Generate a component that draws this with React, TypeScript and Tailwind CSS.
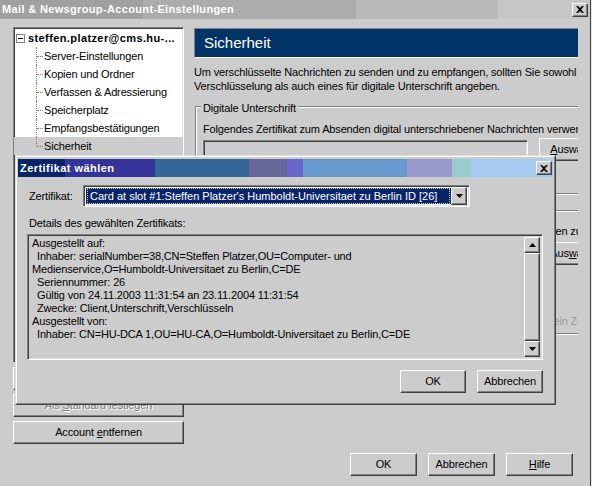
/**
 * Mail & Newsgroup account settings with the certificate picker dialog on top
 * Classic Windows look: grey surfaces, bevelled buttons, sunken fields
 */

const raised =
    'border border-t-white border-l-white border-r-[#404040] border-b-[#404040] shadow-[inset_-1px_-1px_0_#808080]'
const sunken =
    'border border-t-[#808080] border-l-[#808080] border-r-white border-b-white shadow-[inset_1px_1px_0_#404040,inset_-1px_-1px_0_#dfdfdf]'
const etched = 'border border-[#808080] shadow-[inset_1px_1px_0_#fff,1px_1px_0_#fff]'

function CloseGlyph() {
    return (
        <svg width="8" height="7" viewBox="0 0 8 7" className="block">
            <path d="M0 0h2l2 2 2-2h2L5 3.5 8 7H6L4 5 2 7H0l3-3.5z" fill="#000" />
        </svg>
    )
}

function CloseButton({ className = '' }: { className?: string }) {
    return (
        <div className={`flex h-[14px] w-[16px] items-center justify-center bg-[#cccccc] ${raised} ${className}`}>
            <CloseGlyph />
        </div>
    )
}

function Arrow({ down = false }: { down?: boolean }) {
    return (
        <svg width="7" height="4" viewBox="0 0 7 4" className="block">
            <path d={down ? 'M0 0h7L3.5 4z' : 'M3.5 0L7 4H0z'} fill="#000" />
        </svg>
    )
}

function Button({ children, className = '' }: { children: React.ReactNode; className?: string }) {
    return (
        <div className={`flex h-[23px] shrink-0 items-center justify-center bg-[#cccccc] ${raised} ${className}`}>
            {children}
        </div>
    )
}

const treeItems = [
    'Server-Einstellungen',
    'Kopien und Ordner',
    'Verfassen & Adressierung',
    'Speicherplatz',
    'Empfangsbestätigungen',
    'Sicherheit',
]

function AccountTree() {
    return (
        <div className={`h-[336px] overflow-hidden bg-white ${sunken}`}>
            <div className="flex h-[19px] items-center pl-[2px] pt-[1px]">
                <div className="flex h-[9px] w-[9px] items-center justify-center border border-[#808080] bg-white">
                    <div className="h-px w-[5px] bg-black" />
                </div>
                <span className="ml-[3px] whitespace-nowrap font-bold tracking-[0.4px]">steffen.platzer@cms.hu-...</span>
            </div>
            {treeItems.map((item, i) => {
                const last = i === treeItems.length - 1
                return (
                    <div key={item} className={`flex h-[18px] items-center ${last ? 'bg-[#cccccc]' : ''}`}>
                        <div className="relative ml-[22px] h-full w-[7px]">
                            <div
                                className={`absolute left-0 top-0 border-l border-dotted border-[#808080] ${last ? 'h-[9px]' : 'h-full'}`}
                            />
                            <div className="absolute left-[1px] top-[9px] w-[6px] border-t border-dotted border-[#808080]" />
                        </div>
                        <span className="ml-[1px] whitespace-nowrap">{item}</span>
                    </div>
                )
            })}
        </div>
    )
}

function GroupLabel({ children }: { children: React.ReactNode }) {
    return <span className="-mt-[6px] ml-[5px] self-start bg-[#cccccc] px-[2px] leading-[14px]">{children}</span>
}

function SecurityPanel() {
    return (
        <div className="w-[384px] shrink-0 overflow-hidden pt-[1px]">
            <div className="flex h-[30px] items-center border-t border-l border-t-[#808080] border-l-[#808080] border-b border-b-white bg-[#003366] pl-[9px] text-[15px] tracking-normal text-white">
                Sicherheit
            </div>
            <div className="mt-[7px] whitespace-nowrap leading-[14px]">
                <div>Um verschlüsselte Nachrichten zu senden und zu empfangen, sollten Sie sowohl</div>
                <div>Verschlüsselung als auch eines für digitale Unterschrift angeben.</div>
            </div>

            <div className={`ml-[1px] mt-[13px] flex w-[430px] flex-col pb-[9px] ${etched}`}>
                <GroupLabel>Digitale Unterschrift</GroupLabel>
                <div className="ml-[7px] mt-[7px] whitespace-nowrap leading-[14px]">
                    Folgendes Zertifikat zum Absenden digital unterschriebener Nachrichten verwenden:
                </div>
                <div className="ml-[7px] flex items-start">
                    <div className={`mt-[4px] h-[21px] w-[325px] bg-[#cccccc] ${sunken}`} />
                    <Button className="ml-[11px] mt-[2px] w-[75px]">
                        <span>
                            <u>A</u>uswählen
                        </span>
                    </Button>
                </div>
                <div className="ml-[7px] mt-[9px] whitespace-nowrap leading-[14px]">
                    Nachrichten digital unterschreiben (standardmäßig)
                </div>
            </div>

            <div className={`ml-[1px] mt-[16px] flex w-[430px] flex-col pb-[5px] ${etched}`}>
                <GroupLabel>Verschlüsselung</GroupLabel>
                <div className="ml-[7px] mt-[5px] whitespace-nowrap leading-[14px]">
                    Folgendes Zertifikat zum Ver- und Entschlüsseln von Nachrichten verwenden zu können:
                </div>
                <div className="ml-[7px] flex items-start">
                    <div className={`mt-[5px] h-[21px] w-[325px] bg-[#cccccc] ${sunken}`} />
                    <Button className="ml-[11px] mt-[4px] w-[75px]">
                        <span>
                            Aus<u>w</u>ählen
                        </span>
                    </Button>
                </div>
                <div className="ml-[7px] mt-[9px] whitespace-nowrap leading-[14px]">
                    Standard-Verschlüsselungseinstellung beim Senden von Nachrichten:
                </div>
                <div className="ml-[10px] mt-[6px] whitespace-nowrap leading-[14px] text-[#9a9a9a]">
                    ○ Nie (nicht empfohlen)
                </div>
                <div className="ml-[10px] mt-[6px] whitespace-nowrap leading-[14px] text-[#9a9a9a]">
                    ○ Notwendig (Senden nur dann möglich, wenn jeder einzelne Empfänger ein Zertifikat hat)
                </div>
            </div>
        </div>
    )
}

function CertificateDialog() {
    return (
        <div className="absolute left-[15px] top-[155px] h-[250px] w-[541px] border border-t-[#dfdfdf] border-l-[#dfdfdf] border-r-[#404040] border-b-[#404040] bg-[#cccccc]">
            <div className="flex h-full flex-col border border-t-white border-l-white border-r-[#808080] border-b-[#808080] px-[1px] pt-[2px]">
                <div className="flex h-[18px] items-center justify-between bg-[linear-gradient(90deg,#0a246a_0_47px,#333399_47px_137px,#336699_137px_231px,#666699_231px_269px,#6666cc_269px_285px,#6699cc_285px_389px,#9999cc_389px_434px,#99cccc_434px_453px,#a6caf0_453px)] pl-[2px] pr-[1px]">
                    <span className="font-bold tracking-[0.45px] text-white">Zertifikat wählen</span>
                    <CloseButton />
                </div>

                <div className="flex flex-col px-[9px]">
                    <div className="mt-[8px] flex items-center">
                        <span className="w-[56px] pl-[2px]">Zertifikat:</span>
                        <div className={`flex h-[22px] w-[387px] items-center bg-white p-[2px] ${sunken}`}>
                            <div className="flex h-full flex-1 items-center bg-[#0a246a] px-px">
                                <div className="flex h-[16px] flex-1 items-center overflow-hidden whitespace-nowrap border border-dotted border-[#cccc99] pl-[2px] tracking-normal text-white">
                                    Card at slot #1:Steffen Platzer's Humboldt-Universitaet zu Berlin ID [26]
                                </div>
                            </div>
                            <div className={`flex h-[18px] w-[16px] items-center justify-center bg-[#cccccc] ${raised}`}>
                                <Arrow down />
                            </div>
                        </div>
                    </div>

                    <div className="mt-[9px] pl-[2px] leading-[14px]">Details des gewählten Zertifikats:</div>

                    <div className={`mt-[4px] flex h-[126px] w-[516px] ${sunken} p-[2px]`}>
                        <div className="flex-1 overflow-hidden whitespace-nowrap pl-[2px] leading-[13px]">
                            <div>Ausgestellt auf:</div>
                            <div className="pl-[5px]">Inhaber: serialNumber=38,CN=Steffen Platzer,OU=Computer- und</div>
                            <div>Medienservice,O=Humboldt-Universitaet zu Berlin,C=DE</div>
                            <div className="pl-[5px]">Seriennummer: 26</div>
                            <div className="pl-[5px]">Gültig von 24.11.2003 11:31:54 an 23.11.2004 11:31:54</div>
                            <div className="pl-[5px]">Zwecke: Client,Unterschrift,Verschlüsseln</div>
                            <div>Ausgestellt von:</div>
                            <div className="pl-[5px]">Inhaber: CN=HU-DCA 1,OU=HU-CA,O=Humboldt-Universitaet zu Berlin,C=DE</div>
                        </div>
                        <div className="flex w-[16px] flex-col">
                            <div className={`flex h-[16px] items-center justify-center bg-[#cccccc] ${raised}`}>
                                <Arrow />
                            </div>
                            <div className={`flex-1 bg-[#cccccc] ${raised}`} />
                            <div className={`flex h-[16px] items-center justify-center bg-[#cccccc] ${raised}`}>
                                <Arrow down />
                            </div>
                        </div>
                    </div>

                    <div className="mt-[10px] flex justify-end gap-[11px] pr-[1px]">
                        <Button className="w-[66px]">OK</Button>
                        <Button className="w-[66px]">Abbrechen</Button>
                    </div>
                </div>
            </div>
        </div>
    )
}

export default function App() {
    return (
        <div className="relative h-[486px] w-[592px] overflow-hidden bg-[#e6e6e6] font-['Liberation_Sans',Arial,sans-serif] text-[11px] tracking-[-0.15px] text-black">
            <div className="flex h-[486px] w-[591px] flex-col border-r border-[#404040] bg-[#cccccc]">
                <div className="flex h-[19px] items-center justify-between bg-[linear-gradient(90deg,#a0a0a0_0_143px,#acacac_143px_356px,#bababa_356px_498px,#c6c6c6_498px)] pl-[2px] pr-[2px]">
                    <span className="font-bold tracking-[0.35px] text-white">Mail &amp; Newsgroup-Account-Einstellungen</span>
                    <CloseButton />
                </div>

                <div className="flex gap-[10px] pl-[13px] pt-[8px]">
                    <div className="flex w-[171px] shrink-0 flex-col gap-[4px]">
                        <AccountTree />
                        <Button>Account hinzufügen</Button>
                        <Button className="text-[#808080] [text-shadow:1px_1px_0_#fff]">
                            <span>
                                Als <u>S</u>tandard festlegen
                            </span>
                        </Button>
                        <Button>
                            <span>
                                Account <u>e</u>ntfernen
                            </span>
                        </Button>
                    </div>
                    <SecurityPanel />
                </div>

                <div className="mb-[10px] mt-auto flex justify-end gap-[11px] pr-[17px]">
                    <Button className="w-[67px]">OK</Button>
                    <Button className="w-[67px]">Abbrechen</Button>
                    <Button className="w-[67px]">
                        <span>
                            <u>H</u>ilfe
                        </span>
                    </Button>
                </div>
            </div>
            <CertificateDialog />
        </div>
    )
}
